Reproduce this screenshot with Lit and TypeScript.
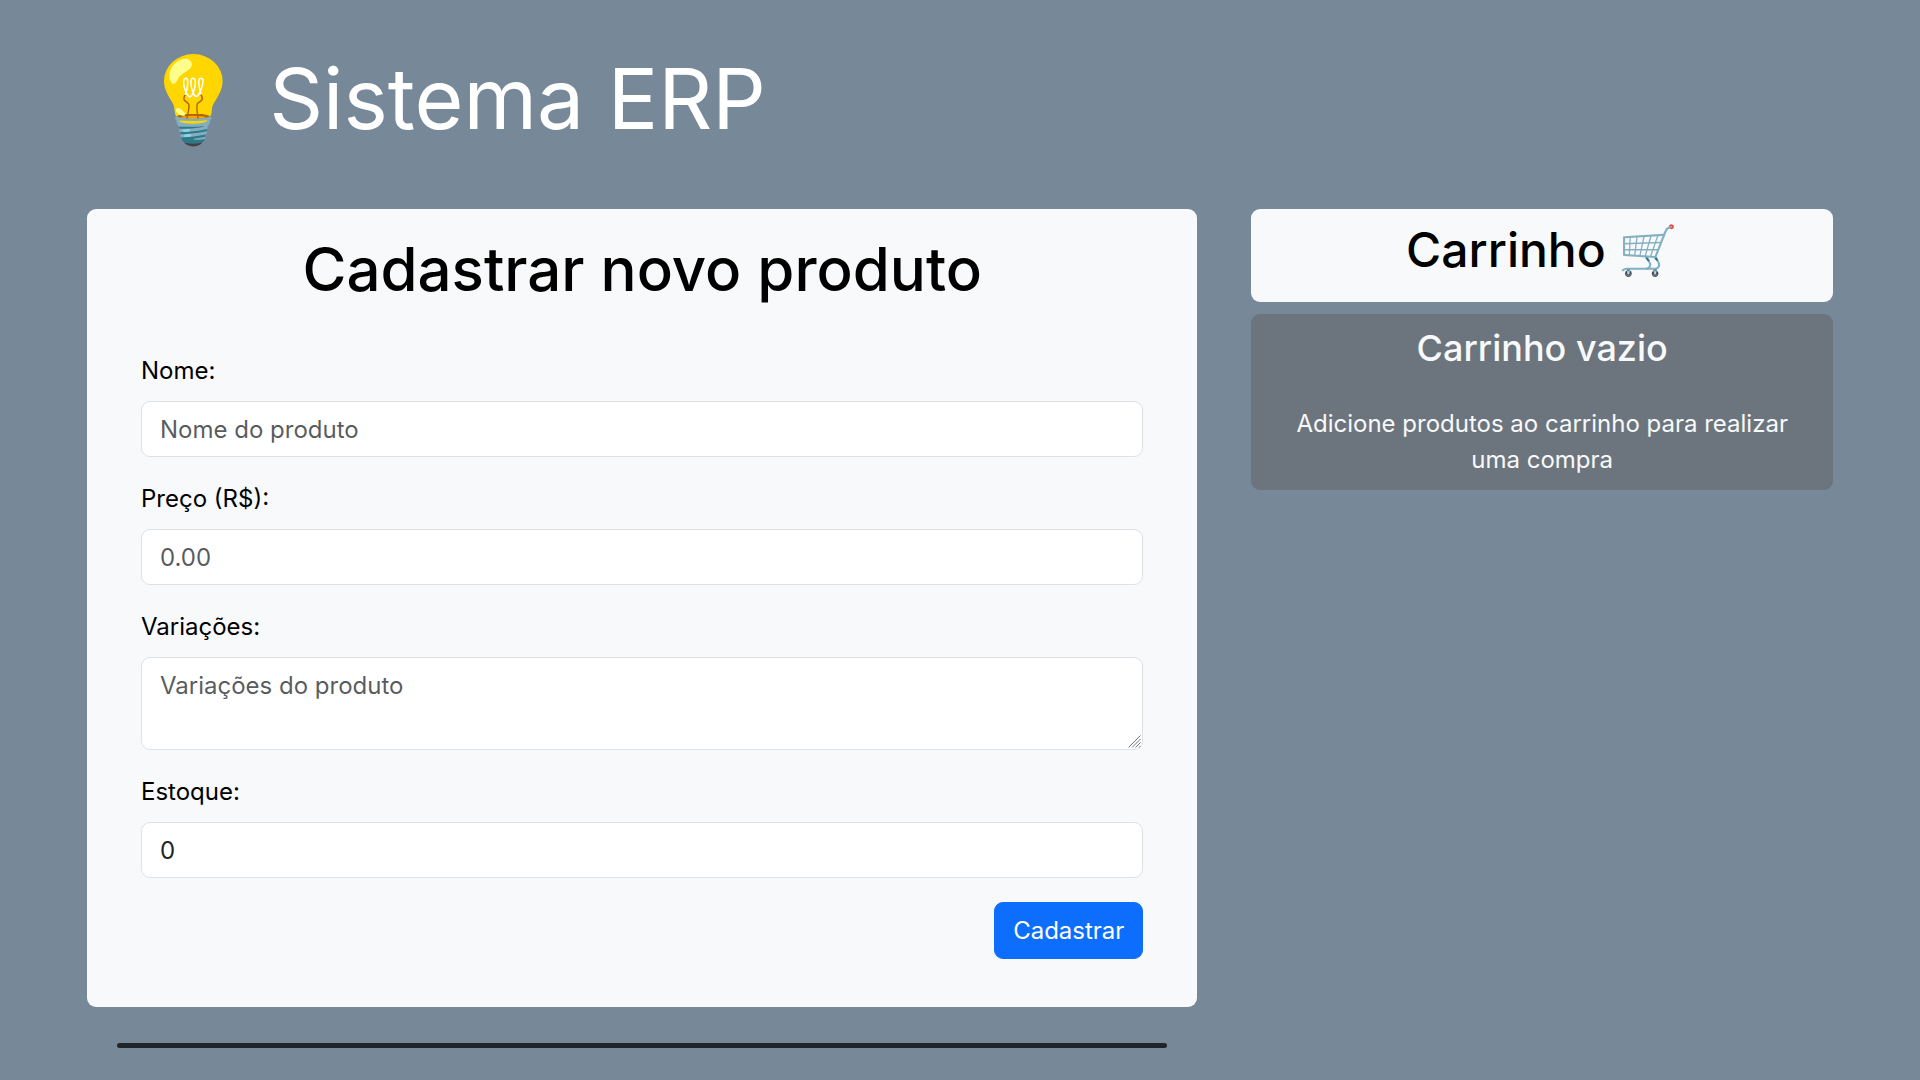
import { LitElement, html, css } from "lit";
import { customElement } from "lit/decorators.js";

@customElement("app-root")
export class AppRoot extends LitElement {
  static styles = css`
    :host {
      display: block;
      min-height: 100vh;
      background: #778899;
      color: #000;
      font-family: Inter, "Noto Color Emoji", sans-serif;
      font-size: 24px;
      line-height: 36px;
    }
    *, *::before, *::after { box-sizing: border-box; }
    h1, h2, h3, p { margin: 0; }
    .header { padding: 48px 141px 60px; }
    .brand {
      color: #fff;
      font-size: 84px;
      font-weight: 400;
      line-height: 101px;
    }
    .layout {
      display: grid;
      grid-template-columns: 21fr 11fr;
      gap: 54px;
      align-items: start;
      padding: 0 87px;
    }
    .card {
      background: #f8f9fa;
      border-radius: 9px;
    }
    .product { padding: 24px 54px 48px; }
    .title {
      margin-bottom: 48px;
      font-size: 60px;
      font-weight: 500;
      line-height: 72px;
      text-align: center;
    }
    .form {
      display: flex;
      flex-direction: column;
      gap: 24px;
    }
    .field {
      display: flex;
      flex-direction: column;
      gap: 12px;
    }
    .control {
      display: block;
      width: 100%;
      margin: 0;
      padding: 9px 18px;
      border: 1px solid #dee2e6;
      border-radius: 9px;
      background: #fff;
      color: #212529;
      font: inherit;
      appearance: none;
    }
    input.control { height: 56px; }
    textarea.control {
      height: 93px;
      padding-top: 10px;
      resize: vertical;
    }
    textarea.control::-webkit-resizer { background: transparent; }
    .area { position: relative; }
    .grip {
      position: absolute;
      right: 2px;
      bottom: 2px;
      width: 13px;
      height: 13px;
      pointer-events: none;
    }
    .control::placeholder {
      color: rgba(33, 37, 41, 0.75);
      opacity: 1;
    }
    .submit {
      align-self: flex-end;
      height: 57px;
      padding: 9px 18px;
      border: 1px solid #0d6efd;
      border-radius: 9px;
      background: #0d6efd;
      color: #fff;
      font: inherit;
      cursor: pointer;
    }
    .rule {
      height: 5px;
      margin: 36px 30px 0;
      border: 0;
      border-radius: 3px;
      background: #212529;
    }
    .cart {
      display: grid;
      gap: 12px;
      text-align: center;
    }
    .cart-head { padding: 12px 12px 24px; }
    .cart-title {
      font-size: 48px;
      font-weight: 500;
      line-height: 57px;
    }
    .empty {
      padding: 12px 36px;
      background: #6c757d;
      color: #f8f9fa;
    }
    .empty-title {
      margin-bottom: 36px;
      font-size: 36px;
      font-weight: 500;
      line-height: 44px;
    }
  `;

  render() {
    return html`
      <header class="header"><h1 class="brand">💡 Sistema ERP</h1></header>
      <main class="layout">
        <div>
          <section class="card product">
            <h2 class="title">Cadastrar novo produto</h2>
            <form class="form" @submit=${(e: Event) => e.preventDefault()}>
              <div class="field">
                <label for="nome">Nome:</label>
                <input class="control" id="nome" type="text" placeholder="Nome do produto" />
              </div>
              <div class="field">
                <label for="preco">Preço (R$):</label>
                <input class="control" id="preco" type="text" inputmode="decimal" placeholder="0.00" />
              </div>
              <div class="field">
                <label for="variacoes">Variações:</label>
                <div class="area">
                  <textarea class="control" id="variacoes" rows="2" placeholder="Variações do produto"></textarea>
                  <svg class="grip" viewBox="0 0 13 13" fill="none" stroke="#777" aria-hidden="true">
                    <path d="M.5 12.5l12-12M4 12.5L12.5 4M7.5 12.5l5-5M11 12.5l1.500-1.500" />
                  </svg>
                </div>
              </div>
              <div class="field">
                <label for="estoque">Estoque:</label>
                <input class="control" id="estoque" type="number" value="0" />
              </div>
              <button class="submit" type="submit">Cadastrar</button>
            </form>
          </section>
          <hr class="rule" />
        </div>
        <aside class="cart">
          <div class="card cart-head"><h2 class="cart-title">Carrinho 🛒</h2></div>
          <div class="card empty">
            <h3 class="empty-title">Carrinho vazio</h3>
            <p>Adicione produtos ao carrinho para realizar uma compra</p>
          </div>
        </aside>
      </main>
    `;
  }
}
